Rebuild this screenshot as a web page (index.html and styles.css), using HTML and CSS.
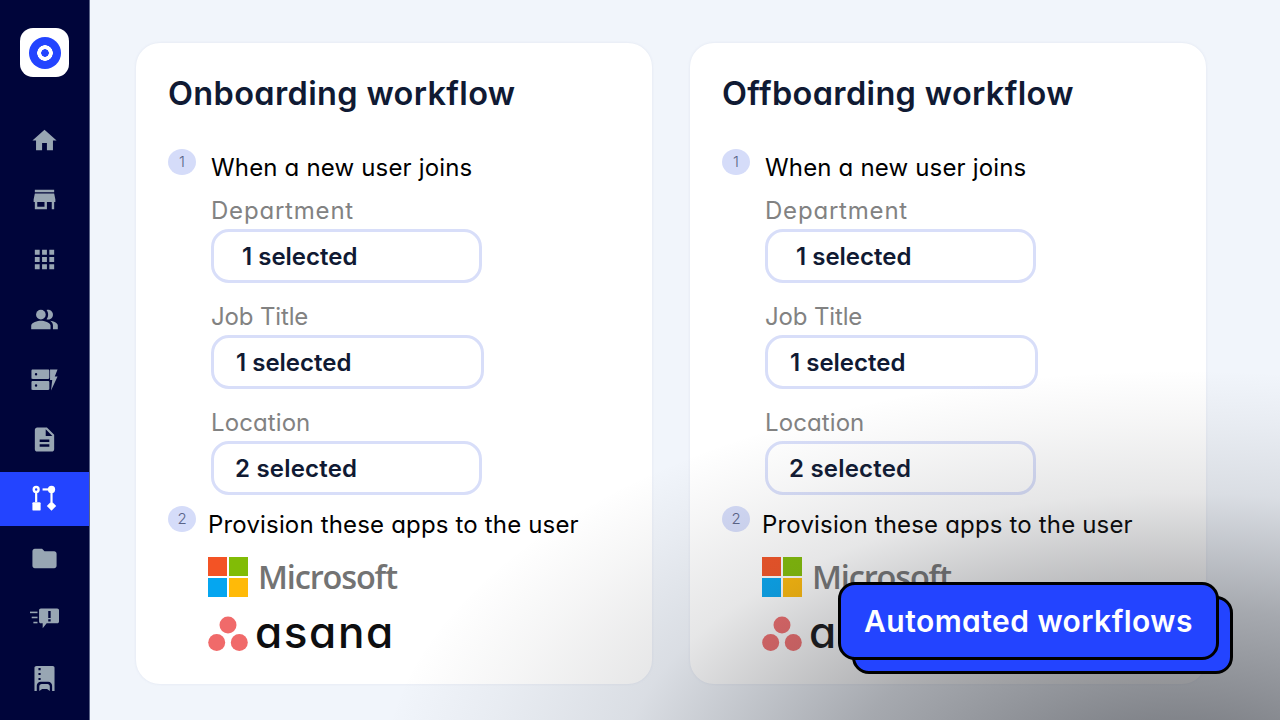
FILE: index.html
```html
<!DOCTYPE html>
<html lang="en">
<head>
  <meta charset="UTF-8">
  <title>Automated workflows</title>
  <link rel="stylesheet" href="styles.css">
</head>
<body>
  <div class="app">
    <nav class="sidebar">
      <div class="logo"><span class="logo-ring"></span></div>
      <ul class="nav">
        <li><svg viewBox="0 0 24 24"><path d="M10 20v-6h4v6h5v-8h3L12 3 2 12h3v8z"/></svg></li>
        <li><svg viewBox="0 0 24 24"><path d="M20 4H4v2h16V4zm1 10v-2l-1-5H4l-1 5v2h1v6h10v-6h4v6h2v-6h1zm-9 4H6v-4h6v4z"/></svg></li>
        <li><svg viewBox="0 0 24 24"><path d="M4 8h4V4H4v4zm6 12h4v-4h-4v4zm-6 0h4v-4H4v4zm0-6h4v-4H4v4zm6 0h4v-4h-4v4zm6-10v4h4V4h-4zm-6 4h4V4h-4v4zm6 6h4v-4h-4v4zm0 6h4v-4h-4v4z"/></svg></li>
        <li><svg viewBox="0 0 24 24"><path d="M16.67 13.13C18.04 14.06 19 15.32 19 17v3h4v-3c0-2.18-3.57-3.47-6.33-3.87z"/><circle cx="9" cy="8" r="4"/><path d="M15 12c2.21 0 4-1.79 4-4s-1.79-4-4-4c-.47 0-.91.1-1.33.24C14.5 5.27 15 6.58 15 8s-.5 2.73-1.33 3.76c.42.14.86.24 1.33.24zM9 13c-2.67 0-8 1.34-8 4v3h16v-3c0-2.66-5.33-4-8-4z"/></svg></li>
        <li><svg viewBox="0 0 24 24"><path fill-rule="evenodd" d="M2.200 3.800h12.800c.6 0 1 .4 1 1v5.800c0 .6-.4 1-1 1H2.200c-.6 0-1-.4-1-1V4.800c0-.6.4-1 1-1zm2.800 2.900a1 1 0 1 0 0 2 1 1 0 0 0 0-2zM2.200 13.300h12.800c.6 0 1 .4 1 1v5.400c0 .6-.4 1-1 1H2.200c-.6 0-1-.4-1-1v-5.400c0-.6.4-1 1-1zm2.800 2.700a1 1 0 1 0 0 2 1 1 0 0 0 0-2z"/><path d="M16.600 3.800H22.800l-2.300 5.700h2.300L17.400 21l1-8.500h-1.800z"/></svg></li>
        <li><svg viewBox="0 0 24 24"><path d="M14 2H6c-1.100 0-1.990.9-1.990 2L4 20c0 1.100.89 2 1.990 2H18c1.100 0 2-.9 2-2V8l-6-6zm2 16H8v-2h8v2zm0-4H8v-2h8v2zm-3-5V3.500L18.500 9H13z"/></svg></li>
        <li class="active"><svg viewBox="0 0 24 24"><path fill-rule="evenodd" d="M5.100 1.500a3 3 0 1 1 0 6 3 3 0 0 1 0-6zm0 2a1 1 0 1 0 0 2 1 1 0 0 0 0-2z"/><rect x="4.200" y="7" width="1.800" height="8"/><rect x="2" y="15" width="6.800" height="7" rx="1"/><rect x="10.400" y="3.600" width="6" height="1.800"/><circle cx="17.800" cy="4.500" r="3"/><rect x="16.900" y="6" width="1.800" height="9"/><path d="M17.800 14.300l3.900 3.900-3.900 3.900-3.900-3.900z"/></svg></li>
        <li><svg viewBox="0 0 24 24"><path d="M10 4H4c-1.100 0-1.990.9-1.990 2L2 18c0 1.100.9 2 2 2h16c1.100 0 2-.9 2-2V8c0-1.100-.9-2-2-2h-8l-2-2z"/></svg></li>
        <li><svg viewBox="0 0 24 24"><path fill-rule="evenodd" d="M9 3.700h13.500c.9 0 1.500.6 1.500 1.500v9.300c0 .9-.6 1.500-1.500 1.500h-8.700l-3.300 4v-4H9c-.9 0-1.500-.6-1.500-1.500V5.200c0-.9.6-1.500 1.500-1.500zM15.100 5.800v5.800h2V5.800zm0 6.800v1.900h2v-1.900z"/><rect x="0" y="6.300" width="6.200" height="1.300"/><rect x="1.400" y="10.500" width="4.800" height="1.300"/><rect x="2.800" y="14.700" width="3.400" height="1.300"/></svg></li>
        <li><svg viewBox="0 0 24 24"><path fill-rule="evenodd" d="M5.500 1.600h13.300c.9 0 1.500.7 1.500 1.500v19.200h-2v-4.300c0-1.900-1.400-3.300-3.200-3.300H8.800c-1.800 0-3.200 1.400-3.200 3.300v4.300h-1.900V3.100c0-.8.700-1.500 1.800-1.500zM7 3.300v1.800h1.800V3.300zm0 4.100v1.800h1.800V7.400zm0 4.100v1.800h1.800v-1.800z"/><path d="M7.700 22.300v-3.600c0-1.200.9-2.100 2-2.100h4.700c1.100 0 2 .9 2 2.100v3.600l-2.300-1.600H10z"/></svg></li>
      </ul>
    </nav>

    <main class="main">
      <section class="card">
        <h2>Onboarding workflow</h2>
        <div class="step">
          <span class="num">1</span>
          <p class="step-title">When a new user joins</p>
        </div>
        <div class="fields">
          <label class="dept">Department</label>
          <div class="select first">1 selected</div>
          <label class="job">Job Title</label>
          <div class="select wide">1 selected</div>
          <label>Location</label>
          <div class="select">2 selected</div>
        </div>
        <div class="step second">
          <span class="num">2</span>
          <p class="step-title">Provision these apps to the user</p>
        </div>
        <div class="apps">
          <div class="app-logo">
            <span class="ms-grid"><i class="r"></i><i class="g"></i><i class="b"></i><i class="y"></i></span>
            <span class="ms-name">Microsoft</span>
          </div>
          <div class="app-logo">
            <svg class="asana-mark" viewBox="0 0 40 36"><circle cx="20" cy="9" r="8.500"/><circle cx="8.700" cy="26.500" r="8.500"/><circle cx="31.300" cy="26.500" r="8.500"/></svg>
            <span class="asana-name">asana</span>
          </div>
        </div>
      </section>

      <section class="card">
        <h2>Offboarding workflow</h2>
        <div class="step">
          <span class="num">1</span>
          <p class="step-title">When a new user joins</p>
        </div>
        <div class="fields">
          <label class="dept">Department</label>
          <div class="select first">1 selected</div>
          <label class="job">Job Title</label>
          <div class="select wide">1 selected</div>
          <label>Location</label>
          <div class="select">2 selected</div>
        </div>
        <div class="step second">
          <span class="num">2</span>
          <p class="step-title">Provision these apps to the user</p>
        </div>
        <div class="apps">
          <div class="app-logo">
            <span class="ms-grid"><i class="r"></i><i class="g"></i><i class="b"></i><i class="y"></i></span>
            <span class="ms-name">Microsoft</span>
          </div>
          <div class="app-logo">
            <svg class="asana-mark" viewBox="0 0 40 36"><circle cx="20" cy="9" r="8.500"/><circle cx="8.700" cy="26.500" r="8.500"/><circle cx="31.300" cy="26.500" r="8.500"/></svg>
            <span class="asana-name">asana</span>
          </div>
        </div>
      </section>
    </main>

    <div class="shade"></div>
    <div class="badge">
      <div class="badge-back"></div>
      <div class="badge-front">Automated workflows</div>
    </div>
  </div>
</body>
</html>
```

FILE: styles.css
```css
* {
  box-sizing: border-box;
}
html, body {
  margin: 0;
  height: 100%;
  overflow: hidden;
}
body {
  font-family: "Inter", "Noto Sans", sans-serif;
  font-feature-settings: "cv11";
  background: #f1f5fb;
  color: #000;
}
.app {
  position: relative;
  display: flex;
  width: 1280px;
  height: 720px;
  overflow: hidden;
}

/* sidebar */
.sidebar {
  width: 90px;
  flex: none;
  background: #00053a;
  border-right: 1px solid #5a6488;
  padding-top: 28px;
}
.logo {
  width: 49px;
  height: 49px;
  margin-left: 20px;
  background: #fff;
  border-radius: 13px;
  display: flex;
  align-items: center;
  justify-content: center;
}
.logo-ring {
  width: 32px;
  height: 32px;
  border-radius: 50%;
  background: radial-gradient(circle, #2344ff 0 3.500px, #fff 4px 7.500px, #2344ff 8px);
}
.nav {
  list-style: none;
  margin: 36px 0 0;
  padding: 0;
  display: flex;
  flex-direction: column;
  gap: 5.830px;
}
.nav li {
  height: 54px;
  display: flex;
  align-items: center;
  justify-content: center;
}
.nav svg {
  width: 29px;
  height: 29px;
  fill: #98a6b3;
}
.nav li.active {
  background: #2344ff;
}
.nav li.active svg {
  fill: #fff;
}

/* cards */
.main {
  flex: 1;
  display: flex;
  gap: 38px;
  padding: 43px 0 36px 46px;
}
.card {
  width: 516px;
  height: 641px;
  background: #fff;
  border-radius: 24px;
  padding: 29px 32px 0;
  box-shadow: 0 0 3px rgba(160, 170, 200, 0.2);
}
h2 {
  margin: 0;
  font-size: 32.500px;
  line-height: 44px;
  font-weight: 600;
  color: #101a33;
  letter-spacing: 0.35px;
}
.step {
  display: flex;
  align-items: flex-start;
  margin-top: 33px;
}
.num {
  width: 28px;
  height: 26px;
  flex: none;
  border-radius: 50%;
  background: #d5dcf9;
  color: #5a6488;
  font-size: 15px;
  font-weight: 300;
  line-height: 25px;
  text-align: center;
}
.step-title {
  margin: 2px 0 0 15px;
  font-size: 24px;
  line-height: 34px;
  color: #000;
  letter-spacing: 0.17px;
}
.step.second {
  margin-top: 11px;
}
.step.second .step-title {
  margin-left: 12px;
}
.fields {
  padding-left: 43px;
}
.fields label {
  display: block;
  margin-top: 9px;
  font-size: 24px;
  line-height: 34px;
  color: #828282;
  letter-spacing: 0.1px;
}
.fields label.dept {
  letter-spacing: 0.8px;
}
.fields label.job {
  letter-spacing: -0.15px;
}
.select {
  width: 271px;
  height: 54px;
  margin-top: 1px;
  margin-bottom: 17px;
  padding-left: 21px;
  border: 3px solid #d8def9;
  border-radius: 18px;
  background: #fff;
  font-size: 24px;
  font-weight: 600;
  line-height: 50px;
  color: #101a33;
  letter-spacing: 0.2px;
}
.select:last-child {
  margin-bottom: 0;
}
.select.first {
  padding-left: 28px;
  letter-spacing: 0;
}
.select.wide {
  width: 273px;
  padding-left: 22px;
  letter-spacing: 0;
}
.fields .select + label {
  margin-top: 0;
}

/* app logos */
.apps {
  padding-left: 40px;
}
.app-logo {
  display: flex;
  align-items: center;
  height: 40px;
  margin-top: 15px;
}
.app-logo + .app-logo {
  margin-top: 17px;
}
.ms-grid {
  display: grid;
  grid-template-columns: 19px 19px;
  grid-auto-rows: 19px;
  gap: 2px;
  width: 40px;
}
.ms-grid i {
  display: block;
}
.ms-grid .r { background: #f35325; }
.ms-grid .g { background: #81bc06; }
.ms-grid .b { background: #05a6f0; }
.ms-grid .y { background: #ffba08; }
.ms-name {
  margin-left: 10px;
  padding-bottom: 2px;
  font-family: "Open Sans", sans-serif;
  font-size: 32.500px;
  font-weight: 600;
  letter-spacing: -1.150px;
  color: #737373;
}
.asana-mark {
  width: 40px;
  height: 36px;
  fill: #f06a6a;
}
.asana-name {
  margin-left: 7px;
  padding-bottom: 4px;
  font-size: 44px;
  font-weight: 500;
  line-height: 40px;
  letter-spacing: 1.600px;
  color: #0d0e10;
}

/* darkening over the bottom right corner */
.shade {
  position: absolute;
  inset: 0;
  pointer-events: none;
  background: radial-gradient(ellipse 800px 410px at 1180px 780px,
    rgba(62, 64, 70, 0.66) 0,
    rgba(62, 64, 70, 0.62) 15%,
    rgba(62, 64, 70, 0.42) 42%,
    rgba(62, 64, 70, 0.13) 70%,
    rgba(62, 64, 70, 0.05) 87%,
    rgba(62, 64, 70, 0) 100%);
}

/* floating label */
.badge {
  position: absolute;
  left: 838px;
  top: 582px;
  width: 395px;
  height: 92px;
}
.badge-back,
.badge-front {
  position: absolute;
  width: 381px;
  height: 78px;
  background: #2344ff;
  border: 3px solid #000;
  border-radius: 17px;
}
.badge-back {
  left: 14px;
  top: 14px;
}
.badge-front {
  left: 0;
  top: 0;
  color: #fff;
  font-size: 30px;
  font-weight: 600;
  line-height: 72px;
  letter-spacing: 0.45px;
  text-align: center;
}
```
